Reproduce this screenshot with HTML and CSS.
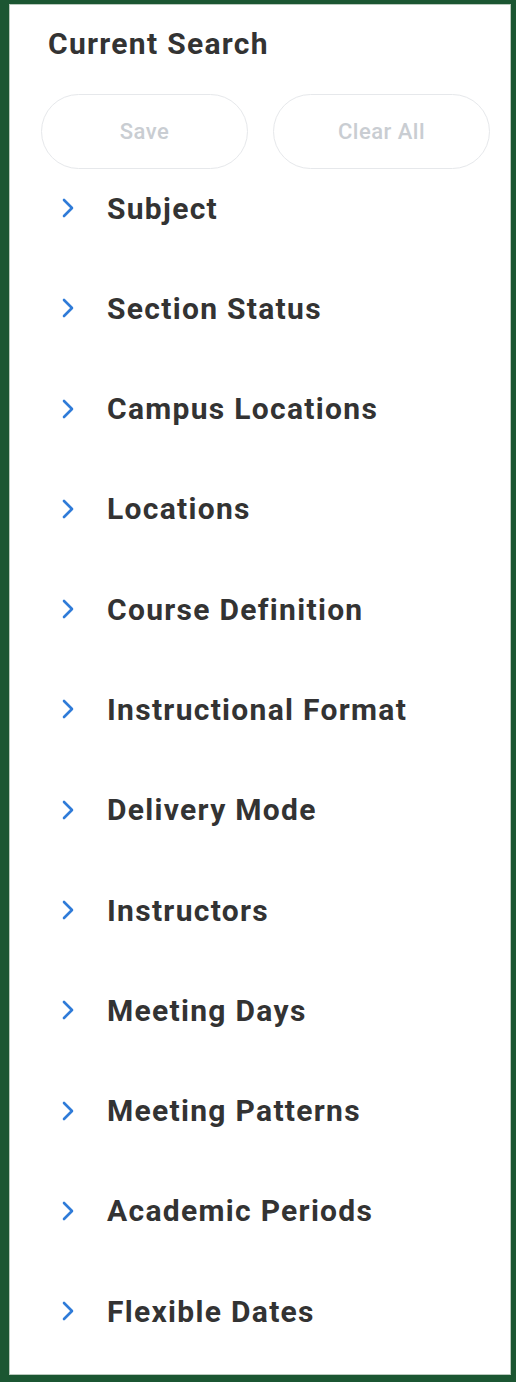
FILE: index.html
```html
<!DOCTYPE html>
<html lang="en">
<head>
<meta charset="utf-8">
<title>Current Search</title>
<link rel="stylesheet" href="styles.css">
</head>
<body>
<div class="frame">
  <aside class="panel">
    <h2 class="panel-title">Current Search</h2>
    <div class="actions">
      <button class="pill" disabled>Save</button>
      <button class="pill" disabled>Clear All</button>
    </div>
    <ul class="facets">
      <li class="facet"><svg class="chev" viewBox="0 0 12 20"><path d="M2 2l8 8-8 8"/></svg><span>Subject</span></li>
      <li class="facet"><svg class="chev" viewBox="0 0 12 20"><path d="M2 2l8 8-8 8"/></svg><span>Section Status</span></li>
      <li class="facet"><svg class="chev" viewBox="0 0 12 20"><path d="M2 2l8 8-8 8"/></svg><span>Campus Locations</span></li>
      <li class="facet"><svg class="chev" viewBox="0 0 12 20"><path d="M2 2l8 8-8 8"/></svg><span>Locations</span></li>
      <li class="facet"><svg class="chev" viewBox="0 0 12 20"><path d="M2 2l8 8-8 8"/></svg><span>Course Definition</span></li>
      <li class="facet"><svg class="chev" viewBox="0 0 12 20"><path d="M2 2l8 8-8 8"/></svg><span>Instructional Format</span></li>
      <li class="facet"><svg class="chev" viewBox="0 0 12 20"><path d="M2 2l8 8-8 8"/></svg><span>Delivery Mode</span></li>
      <li class="facet"><svg class="chev" viewBox="0 0 12 20"><path d="M2 2l8 8-8 8"/></svg><span>Instructors</span></li>
      <li class="facet"><svg class="chev" viewBox="0 0 12 20"><path d="M2 2l8 8-8 8"/></svg><span>Meeting Days</span></li>
      <li class="facet"><svg class="chev" viewBox="0 0 12 20"><path d="M2 2l8 8-8 8"/></svg><span>Meeting Patterns</span></li>
      <li class="facet"><svg class="chev" viewBox="0 0 12 20"><path d="M2 2l8 8-8 8"/></svg><span>Academic Periods</span></li>
      <li class="facet"><svg class="chev" viewBox="0 0 12 20"><path d="M2 2l8 8-8 8"/></svg><span>Flexible Dates</span></li>
    </ul>
  </aside>
</div>
</body>
</html>
```
FILE: styles.css
```css
* { box-sizing: border-box; }

html, body {
  margin: 0;
  padding: 0;
  background: #1b5632;
}

.frame {
  width: 516px;
  height: 1382px;
  background: #1b5632;
  padding: 4px 5px 7px 9px;
}

.panel {
  height: 100%;
  background: #ffffff;
  border: 1px solid #b9c9bd;
  padding: 21px 0 0 31px;
  font-family: Roboto, "Liberation Sans", Arial, sans-serif;
  color: #333333;
}

.panel-title {
  margin: 0 0 0 7px;
  font-size: 30px;
  font-weight: 700;
  line-height: 36px;
  letter-spacing: 1.3px;
  color: #333333;
}

.actions {
  display: grid;
  grid-template-columns: 207px 217px;
  gap: 25px;
  margin-top: 32px;
}

.pill {
  height: 75px;
  border: 1.5px solid #e6e8eb;
  border-radius: 38px;
  background: #ffffff;
  font-family: inherit;
  font-size: 22px;
  font-weight: 500;
  letter-spacing: 0.5px;
  color: #c9cdd2;
  padding: 0;
}

.facets {
  list-style: none;
  margin: 19px 0 0 0;
  padding: 0;
  display: flex;
  flex-direction: column;
  gap: 60.3px;
}

.facet {
  display: flex;
  align-items: center;
  height: 40px;
  font-size: 30px;
  font-weight: 700;
  letter-spacing: 1.3px;
  color: #333333;
}

.chev {
  width: 12px;
  height: 20px;
  margin: 0 33px 0 21px;
  flex: none;
  fill: none;
  stroke: #2f7bd8;
  stroke-width: 2.6;
  stroke-linecap: round;
  stroke-linejoin: round;
}
```
